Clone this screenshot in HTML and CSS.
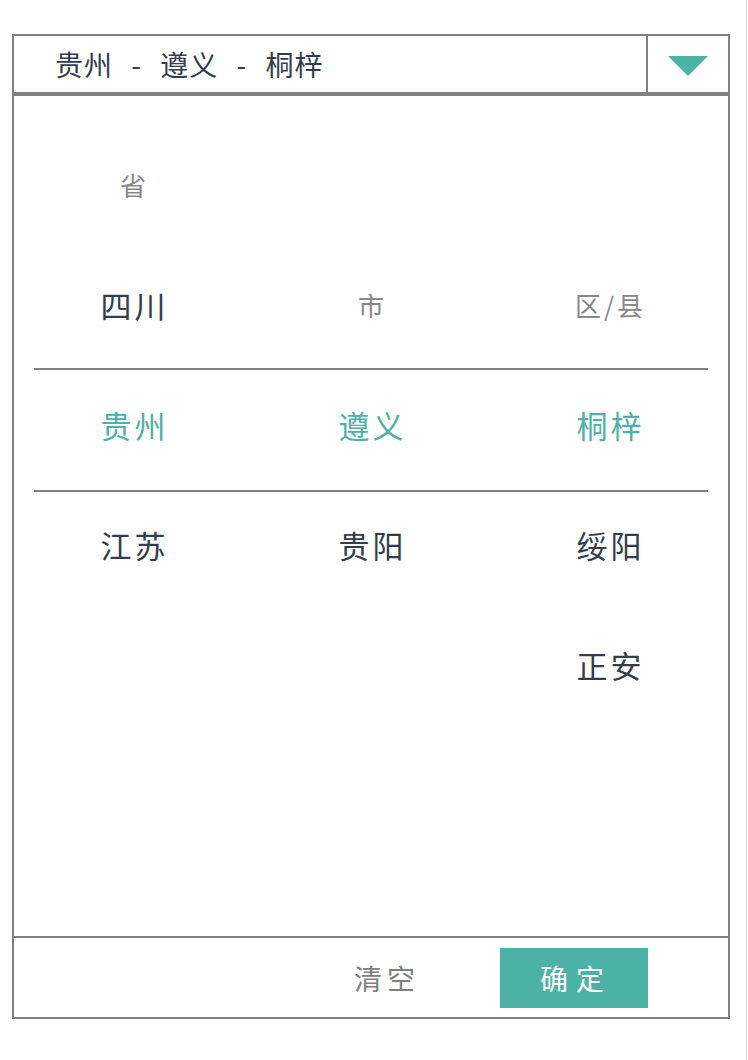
FILE: index.html
```html
<!DOCTYPE html>
<html lang="zh-CN">
<head>
<meta charset="utf-8">
<title>地区选择</title>
<link rel="stylesheet" href="styles.css">
</head>
<body>
<div class="page">
  <div class="picker">
    <div class="picker-head">
      <div class="picker-value">贵州 - 遵义 - 桐梓</div>
      <div class="picker-toggle"><span class="caret"></span></div>
    </div>
    <div class="picker-body">
      <div class="picker-band"></div>
      <ul class="col col-prov">
        <li class="item placeholder">省</li>
        <li class="item">四川</li>
        <li class="item active">贵州</li>
        <li class="item">江苏</li>
      </ul>
      <ul class="col col-city">
        <li class="item placeholder">市</li>
        <li class="item active">遵义</li>
        <li class="item">贵阳</li>
      </ul>
      <ul class="col col-area">
        <li class="item placeholder">区/县</li>
        <li class="item active">桐梓</li>
        <li class="item">绥阳</li>
        <li class="item">正安</li>
      </ul>
    </div>
    <div class="picker-foot">
      <button class="btn-clear" type="button">清空</button>
      <button class="btn-ok" type="button">确定</button>
    </div>
  </div>
</div>
</body>
</html>
```
FILE: styles.css
```css
html, body {
  margin: 0;
  padding: 0;
  background: #fff;
}
body {
  font-family: "Noto Sans CJK SC", "Noto Sans", sans-serif;
  color: #343e4b;
}
.page {
  width: 747px;
  min-height: 1060px;
  border-right: 1px solid #dcdcdc;
  padding: 34px 0 0 12px;
  box-sizing: border-box;
}
.picker {
  width: 718px;
  border: 2px solid #808080;
  box-sizing: border-box;
  background: #fff;
}
.picker-head {
  display: flex;
  height: 60px;
  border-bottom: 4px solid #808080;
  box-sizing: border-box;
}
.picker-value {
  flex: 1;
  padding-left: 41px;
  font-size: 28px;
  line-height: 56px;
  letter-spacing: 1px;
  word-spacing: 11px;
  color: #343e4b;
  white-space: nowrap;
}
.picker-toggle {
  width: 82px;
  border-left: 2px solid #808080;
  box-sizing: border-box;
  display: flex;
  align-items: center;
  justify-content: center;
  padding-top: 4px;
}
.caret {
  width: 0;
  height: 0;
  border-left: 20px solid transparent;
  border-right: 20px solid transparent;
  border-top: 20px solid #4db2a6;
}
.picker-body {
  position: relative;
  display: flex;
  height: 840px;
}
.picker-band {
  position: absolute;
  left: 20px;
  right: 20px;
  top: 272px;
  height: 124px;
  border-top: 2px solid #808080;
  border-bottom: 2px solid #808080;
  box-sizing: border-box;
  pointer-events: none;
}
.col {
  flex: 1;
  list-style: none;
  margin: 0;
  padding: 0;
}
.col-prov { padding-top: 34px; }
.col-city { padding-top: 154px; }
.col-area { padding-top: 154px; }
.item {
  height: 120px;
  line-height: 109px;
  padding-bottom: 11px;
  box-sizing: border-box;
  text-align: center;
  font-size: 31px;
  letter-spacing: 3px;
  text-indent: 3px;
  color: #343e4b;
}
.item.placeholder {
  font-size: 26px;
  letter-spacing: 3px;
  text-indent: 3px;
  color: #888;
}
.item.active {
  color: #4db2a6;
}
.picker-foot {
  display: flex;
  align-items: center;
  justify-content: flex-end;
  height: 81px;
  border-top: 2px solid #808080;
  box-sizing: border-box;
  padding-right: 80px;
  gap: 80px;
}
.btn-clear,
.btn-ok {
  font-family: "Noto Sans CJK SC", "Noto Sans", sans-serif;
  font-size: 28px;
  border: 0;
  margin: 0;
  padding: 0;
  cursor: pointer;
}
.btn-clear {
  background: transparent;
  color: #808080;
  letter-spacing: 5px;
}
.btn-ok {
  width: 148px;
  height: 60px;
  background: #4db2a6;
  color: #fff;
  letter-spacing: 8px;
  text-indent: 4px;
}
```
